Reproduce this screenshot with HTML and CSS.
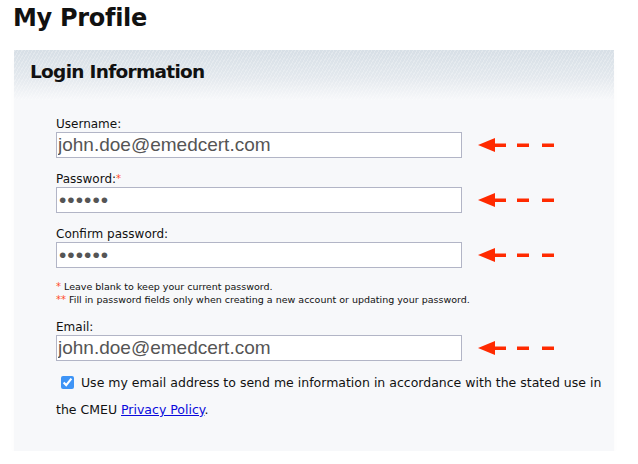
FILE: index.html
```html
<!DOCTYPE html>
<html lang="en">
<head>
    <meta charset="UTF-8">
    <title>My Profile</title>
    <link rel="stylesheet" href="styles.css">
</head>
<body>
    <h1 class="page-title">My Profile</h1>

    <div class="panel">
        <div class="panel-head">
            <h2>Login Information</h2>
        </div>

        <form class="login-form">
            <div class="row">
                <div class="field">
                    <label>Username:</label>
                    <input type="text" class="text-input" value="john.doe@emedcert.com">
                </div>
                <svg class="arrow" width="80" height="16" viewBox="0 0 80 16"><path d="M0 8 L17 1 L17 15 Z" fill="#ff2a00"/><rect x="16" y="6.5" width="12" height="3.5" fill="#ff2a00"/><rect x="39" y="6.5" width="12" height="3.5" fill="#ff2a00"/><rect x="64" y="6.5" width="12" height="3.5" fill="#ff2a00"/></svg>
            </div>

            <div class="row">
                <div class="field">
                    <label>Password:<span class="req">*</span></label>
                    <input type="password" class="text-input pw" value="secret">
                </div>
                <svg class="arrow" width="80" height="16" viewBox="0 0 80 16"><path d="M0 8 L17 1 L17 15 Z" fill="#ff2a00"/><rect x="16" y="6.5" width="12" height="3.5" fill="#ff2a00"/><rect x="39" y="6.5" width="12" height="3.5" fill="#ff2a00"/><rect x="64" y="6.5" width="12" height="3.5" fill="#ff2a00"/></svg>
            </div>

            <div class="row">
                <div class="field">
                    <label>Confirm password:</label>
                    <input type="password" class="text-input pw" value="secret">
                </div>
                <svg class="arrow" width="80" height="16" viewBox="0 0 80 16"><path d="M0 8 L17 1 L17 15 Z" fill="#ff2a00"/><rect x="16" y="6.5" width="12" height="3.5" fill="#ff2a00"/><rect x="39" y="6.5" width="12" height="3.5" fill="#ff2a00"/><rect x="64" y="6.5" width="12" height="3.5" fill="#ff2a00"/></svg>
            </div>

            <div class="notes">
                <div><span class="req">*</span> Leave blank to keep your current password.</div>
                <div><span class="req">**</span> Fill in password fields only when creating a new account or updating your password.</div>
            </div>

            <div class="row last">
                <div class="field">
                    <label>Email:</label>
                    <input type="text" class="text-input" value="john.doe@emedcert.com">
                </div>
                <svg class="arrow" width="80" height="16" viewBox="0 0 80 16"><path d="M0 8 L17 1 L17 15 Z" fill="#ff2a00"/><rect x="16" y="6.5" width="12" height="3.5" fill="#ff2a00"/><rect x="39" y="6.5" width="12" height="3.5" fill="#ff2a00"/><rect x="64" y="6.5" width="12" height="3.5" fill="#ff2a00"/></svg>
            </div>

            <p class="consent">
                <input type="checkbox" class="check" checked>
                Use my email address to send me information in accordance with the stated use in the CMEU <a href="#">Privacy Policy</a>.
            </p>
        </form>
    </div>
</body>
</html>
```

FILE: styles.css
```css
body {
    margin: 0;
    font-family: 'DejaVu Sans', Verdana, sans-serif;
    color: #111;
    background: #fff;
}
.page-title {
    font-size: 24px;
    font-weight: bold;
    margin: 0;
    padding: 4px 0 0 13px;
    height: 46px;
    letter-spacing: -0.3px;
}
.panel {
    width: 600px;
    margin-left: 14px;
    height: 401px;
    background: #f7f8fa;
    box-shadow: 0 7px 8px -4px rgba(0, 0, 0, 0.08);
}
.panel-head {
    height: 50px;
    padding: 11px 0 0 16px;
    box-sizing: border-box;
    background:
        repeating-linear-gradient(-60deg, rgba(255, 255, 255, 0.25) 0 1px, transparent 1px 3px),
        linear-gradient(to bottom, #d7dfe6 0%, #e4e9ee 55%, #f7f8fa 100%);
}
.panel-head h2 {
    margin: 0;
    font-size: 18.5px;
    font-weight: bold;
    letter-spacing: -0.7px;
}
.login-form {
    padding: 16px 0 0 42px;
}
.row {
    display: flex;
    align-items: flex-end;
    margin-bottom: 13px;
}
.row.last {
    margin-bottom: 0;
}
.field {
    width: 406px;
}
.field label {
    display: block;
    font-size: 12px;
    line-height: 16px;
    color: #111;
}
.req {
    color: #ff4a2a;
    font-size: 10px;
    vertical-align: top;
}
.text-input {
    display: block;
    box-sizing: border-box;
    width: 406px;
    height: 26px;
    margin: 0;
    padding: 0 1px;
    border: 1px solid #b2b5c6;
    background: #fff;
    font-family: 'Liberation Sans', Arial, sans-serif;
    font-size: 19px;
    color: #555;
    outline: none;
}
.text-input.pw {
    font-size: 21px;
    letter-spacing: 1px;
    padding-left: 2px;
}
.arrow {
    margin: 0 0 5px 16px;
}
.notes {
    font-size: 9.5px;
    line-height: 13px;
    margin: -1px 0 13px 0;
}
.notes .req {
    vertical-align: baseline;
}
.consent {
    margin: 0;
    width: 552px;
    padding-top: 8px;
    font-size: 12.5px;
    line-height: 27px;
}
.check {
    width: 13px;
    height: 13px;
    margin: 0 3px 0 5px;
    vertical-align: -2px;
    accent-color: #3e94f6;
}
.consent a {
    color: #0a0adc;
}
```
